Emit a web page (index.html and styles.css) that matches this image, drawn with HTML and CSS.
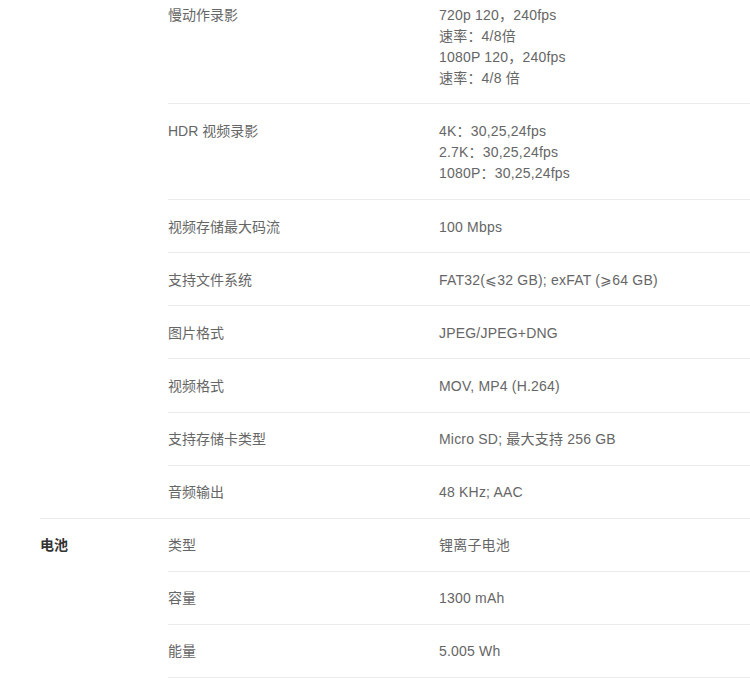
FILE: index.html
```html
<!DOCTYPE html>
<html lang="zh-CN">
<head>
<meta charset="utf-8">
<title>规格参数</title>
<link rel="stylesheet" href="styles.css">
</head>
<body>
<div class="specs">
  <section class="section">
    <div class="label"></div>
    <div class="rows">
      <div class="row"><div class="name">慢动作录影</div><div class="value">720p 120，240fps<br>速率：4/8倍<br>1080P 120，240fps<br>速率：4/8 倍</div></div>
      <div class="row row-multi"><div class="name">HDR 视频录影</div><div class="value">4K：30,25,24fps<br>2.7K：30,25,24fps<br>1080P：30,25,24fps</div></div>
      <div class="row"><div class="name">视频存储最大码流</div><div class="value">100 Mbps</div></div>
      <div class="row"><div class="name">支持文件系统</div><div class="value">FAT32(⩽32 GB); exFAT (⩾64 GB)</div></div>
      <div class="row"><div class="name">图片格式</div><div class="value">JPEG/JPEG+DNG</div></div>
      <div class="row"><div class="name">视频格式</div><div class="value">MOV, MP4 (H.264)</div></div>
      <div class="row"><div class="name">支持存储卡类型</div><div class="value">Micro SD; 最大支持 256 GB</div></div>
      <div class="row"><div class="name">音频输出</div><div class="value">48 KHz; AAC</div></div>
    </div>
  </section>
  <section class="section">
    <div class="label">电池</div>
    <div class="rows">
      <div class="row"><div class="name">类型</div><div class="value">锂离子电池</div></div>
      <div class="row"><div class="name">容量</div><div class="value">1300 mAh</div></div>
      <div class="row"><div class="name">能量</div><div class="value">5.005 Wh</div></div>
    </div>
  </section>
</div>
</body>
</html>
```

FILE: styles.css
```css
html, body {
  margin: 0;
  padding: 0;
  background: #fff;
}
body {
  font-family: "Liberation Sans", "Noto Sans CJK SC", sans-serif;
  font-size: 14px;
  line-height: 21px;
  color: #666;
}
.specs {
  margin: -12px 0 0 40px;
}
.section {
  display: grid;
  grid-template-columns: 128px 1fr;
}
.section + .section {
  border-top: 1px solid #ebebeb;
}
.label {
  padding-top: 16.5px;
  font-weight: bold;
  color: #333;
}
.row {
  display: grid;
  grid-template-columns: 271px 1fr;
  padding: 16.5px 0 14.6px;
  border-bottom: 1px solid #ebebeb;
}
.row-multi {
  padding-bottom: 15.6px;
}
.value {
  letter-spacing: 0.2px;
}
.section:not(:last-child) .row:last-child {
  border-bottom: none;
}
```
